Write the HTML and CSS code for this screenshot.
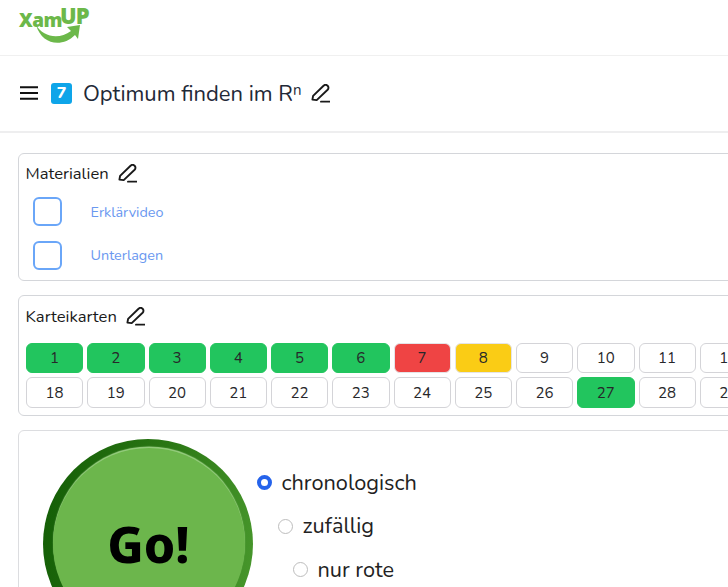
FILE: index.html
```html
<!DOCTYPE html>
<html lang="de">
<head>
<meta charset="utf-8">
<title>XamUP</title>
<link rel="stylesheet" href="styles.css">
</head>
<body>
<header class="topbar">
  <a class="logo">
    <span class="logo-xam">Xam</span><span class="logo-up">UP</span>
    <svg class="logo-arrow" viewBox="0 0 46 20" width="46" height="20"><path d="M1 1 C8 13 24 16 36 7 L32 3 L45 1 L43 15 L40 11 C27 24 7 21 1 1 Z" fill="#6cb84a"/></svg>
  </a>
</header>
<section class="titlebar">
  <svg class="burger" viewBox="0 0 18 14" width="18" height="14"><path d="M0 1.2H18M0 7H18M0 12.8H18" stroke="#111" stroke-width="2"/></svg>
  <span class="badge">7</span>
  <h1 class="title">Optimum finden im R<sup class="sup">n</sup></h1>
  <svg class="pen pen-lg" viewBox="0 0 20 20" width="19" height="19"><use href="#pen"/></svg>
</section>
<svg class="defs" width="0" height="0"><defs><g id="pen"><path d="M1.5 16.5 L2.2 12.5 L13.2 1.8 C14.4 .7 16.3 .7 17.5 1.8 C18.7 3 18.7 4.9 17.5 6.1 L6 17 L1.5 16.5 Z M10.5 18.6 H19.5" fill="none" stroke="#1a1a1a" stroke-width="2" stroke-linejoin="round" stroke-linecap="round"/></g></defs></svg>
<main class="content">
  <section class="card materials">
    <div class="card-head"><span>Materialien</span><svg class="pen" viewBox="0 0 20 20" width="19" height="19"><use href="#pen"/></svg></div>
    <div class="mat-row"><span class="check"></span><a class="mat-link">Erklärvideo</a></div>
    <div class="mat-row"><span class="check"></span><a class="mat-link">Unterlagen</a></div>
  </section>
  <section class="card flash">
    <div class="card-head"><span>Karteikarten</span><svg class="pen" viewBox="0 0 20 20" width="19" height="19"><use href="#pen"/></svg></div>
    <div class="grid">
      <span class="cell green">1</span><span class="cell green">2</span><span class="cell green">3</span><span class="cell green">4</span><span class="cell green">5</span><span class="cell green">6</span><span class="cell red">7</span><span class="cell yellow">8</span><span class="cell">9</span><span class="cell">10</span><span class="cell">11</span><span class="cell">12</span>
      <span class="cell">18</span><span class="cell">19</span><span class="cell">20</span><span class="cell">21</span><span class="cell">22</span><span class="cell">23</span><span class="cell">24</span><span class="cell">25</span><span class="cell">26</span><span class="cell green">27</span><span class="cell">28</span><span class="cell">29</span>
    </div>
  </section>
  <section class="card go-card">
    <button class="go"><span class="go-inner">Go!</span></button>
    <div class="options">
      <label class="opt"><span class="radio on"></span>chronologisch</label>
      <label class="opt opt2"><span class="radio"></span>zufällig</label>
      <label class="opt opt3"><span class="radio"></span>nur rote</label>
    </div>
  </section>
</main>
</body>
</html>
```
FILE: styles.css
```css
html, body { margin: 0; padding: 0; height: 587px; overflow: hidden; background: #fff; }
body { width: 1000px; font-family: "Nunito", "Noto Sans", "Open Sans", sans-serif; color: #1a1a1a; }
.defs { position: absolute; }
.topbar { height: 55px; border-bottom: 1px solid #f0f0f0; }
.logo { position: relative; display: block; width: 72px; height: 46px; margin-left: 19px; top: 4px; color: #6cb84a; font-weight: 800; }
.logo-xam { position: absolute; left: 0; top: 4px; font-size: 19px; line-height: 24px; letter-spacing: -0.5px; font-family: "Open Sans", sans-serif; }
.logo-up { position: absolute; left: 41px; top: -2px; font-size: 22px; line-height: 26px; letter-spacing: -1px; font-family: "Open Sans", sans-serif; }
.logo-arrow { position: absolute; left: 16px; top: 20px; }
.titlebar { height: 75px; display: flex; align-items: center; padding-left: 20px; border-bottom: 2px solid #eeeeef; }
.burger { flex: none; transform: translateY(-1px); }
.badge { margin-left: 13px; width: 21px; height: 21px; border-radius: 3px; background: #0ea5e9; color: #fff; font-weight: 800; font-size: 16px; line-height: 21px; text-align: center; }
.title { margin: 0 0 0 11px; font-size: 22px; font-weight: 400; color: #1f2937; line-height: 30px; }
.sup { font-size: 15px; line-height: 0; vertical-align: 6px; }
.pen-lg { margin-left: 9px; }
.content { padding: 20px 0 0 18px; display: flex; flex-direction: column; gap: 14px; width: 900px; }
.card { border: 1.5px solid #d4d6da; border-radius: 6px; background: #fff; box-sizing: border-box; }
.materials { height: 128px; padding: 0 0 0 6.5px; }
.card-head { display: flex; align-items: center; gap: 9px; font-size: 16.6px; height: 36px; padding-top: 2px; box-sizing: border-box; color: #1a1a1a; }
.mat-row { display: flex; align-items: center; height: 43.5px; padding-left: 7px; }
.check { width: 29px; height: 29px; border: 2px solid #6aa6f8; border-radius: 6px; box-sizing: border-box; flex: none; }
.mat-link { margin-left: 29px; font-size: 14.4px; color: #6a98f0; }
.flash { height: 121px; padding: 0 0 0 6.5px; }
.flash .card-head { height: 38px; margin-bottom: 8.5px; }
.grid { display: grid; grid-template-columns: repeat(12, 57.25px); grid-template-rows: 30.5px 31px; column-gap: 4px; row-gap: 4px; margin-left: 0.5px; }
.cell { border: 1.5px solid #d4d4d8; border-radius: 6px; box-sizing: border-box; display: flex; align-items: center; justify-content: center; font-size: 15px; color: #27272a; background: #fff; }
.green { background: #22c55e; border-color: #22c55e; }
.red { background: #ef4444; border-color: #e4e4e7; }
.yellow { background: #facc15; border-color: #e4e4e7; }
.go-card { height: 300px; display: flex; padding: 8px 0 0 23.5px; border-color: #dcdde0; }
.go { width: 210px; height: 210px; flex: none; border: 0; border-radius: 50%; padding: 0; font: inherit; background: linear-gradient(100deg, #125c05, #2a7614 50%, #4a9a2e); position: relative; }
.go-inner { position: absolute; left: 10px; top: 9px; width: 192px; height: 192px; border-radius: 50%; background: #6cb64c; box-shadow: 0 -1.5px 1px #9ad083; display: flex; align-items: center; justify-content: center; font-family: "Noto Sans", sans-serif; font-size: 50px; font-weight: 800; color: #000; }
.options { display: flex; flex-direction: column; margin: 21.75px 0 0 4px; }
.opt { display: flex; align-items: center; height: 43.5px; font-size: 21.7px; color: #222; }
.radio { width: 15px; height: 15px; border: 1.5px solid #bdbdbd; border-radius: 50%; box-sizing: border-box; margin-right: 10px; background: #fff; }
.radio.on { border: 4.5px solid #2563eb; }
.opt2 { margin-left: 21px; }
.opt3 { margin-left: 36px; }
```
